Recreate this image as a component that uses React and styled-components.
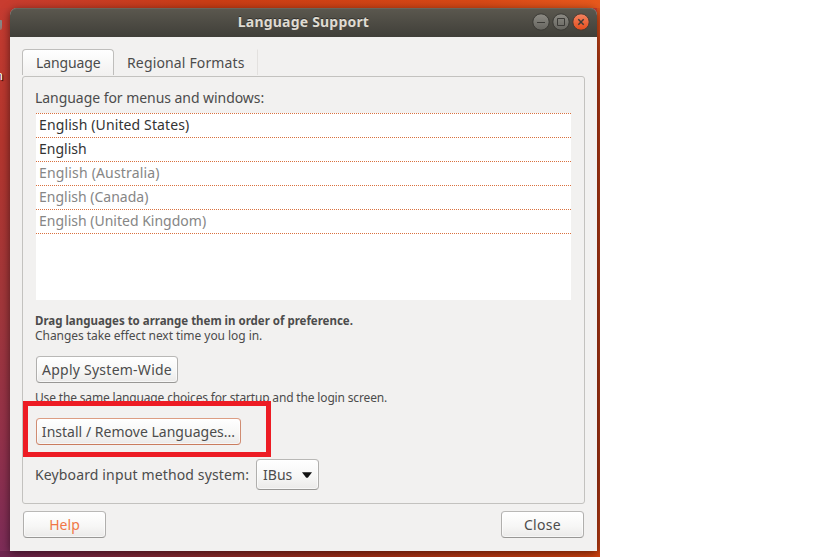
import React from "react";
import styled, { createGlobalStyle } from "styled-components";

const GlobalStyle = createGlobalStyle`
  * { box-sizing: border-box; }
  body { margin: 0; background: #fff; overflow: hidden; }
`;

const Desktop = styled.div`
  position: relative;
  width: 600px;
  height: 557px;
  padding: 8px 3px 6px 10px;
  overflow: hidden;
  font-family: "Noto Sans", sans-serif;
  font-size: 14px;
  background:
    linear-gradient(90deg, #6f2450, #8c2a2c 35%, #a52f17 60%, #d0420f) 0 551px / 600px 6px no-repeat,
    linear-gradient(90deg, #c83c30, #cb3d15 35%, #d84916 80%, #e9591d) 0 0 / 600px 8px no-repeat,
    linear-gradient(180deg, #e2541c, #b53a15 12%, #a83414 85%, #c54014) 597px 0 / 3px 557px no-repeat,
    linear-gradient(180deg, #c73c31, #b5362e 25%, #a2373b 55%, #94324a 78%, #7c2c59);
`;

const IconLabel = styled.span`
  position: absolute;
  left: -5px;
  top: 66px;
  line-height: 18px;
  font-size: 13px;
  color: #fff;
  text-shadow: 1px 1px 1px #000;
`;

const IconEdge = styled.span`
  position: absolute;
  left: 0;
  top: 20px;
  width: 2px;
  height: 10px;
  background: linear-gradient(#858585 50%, #a66a62);
  border-radius: 0 1px 3px 0;
`;

const Window = styled.main`
  position: relative;
  display: flex;
  flex-direction: column;
  width: 587px;
  height: 543px;
  border-radius: 7px 7px 0 0;
  background: #f2f1f0;
  color: #4c4c4c;
  box-shadow: 0 2px 10px rgba(0, 0, 0, 0.55);
`;

const TitleBar = styled.header`
  display: grid;
  grid-template-columns: 66px 1fr 66px;
  align-items: center;
  height: 29px;
  flex: none;
  border-radius: 7px 7px 0 0;
  background: linear-gradient(#5b584f, #403f39);
  box-shadow: inset 0 1px #68655c;
`;

const Title = styled.h1`
  grid-column: 2;
  margin: 0 0 1px;
  text-align: center;
  font-size: 14px;
  line-height: 20px;
  letter-spacing: 0.2px;
  color: #dfdbd2;
  text-shadow: 0 -1px #33322e;
`;

const Controls = styled.div`
  display: flex;
  gap: 2px;
  padding-left: 1px;
  margin-top: -1px;
`;

const Control = styled.svg`
  display: block;
  width: 18px;
  height: 18px;
`;

const Content = styled.div`
  display: flex;
  flex-direction: column;
  padding: 12px 12px 0;
`;

const Tabs = styled.nav`
  display: flex;
  height: 27px;
`;

const Tab = styled.div`
  width: ${(p) => p.$width}px;
  height: 26px;
  padding-left: ${(p) => (p.$active ? 13 : 12)}px;
  line-height: 26px;
  letter-spacing: ${(p) => p.$track}px;
  white-space: nowrap;
  border: 1px solid transparent;
  border-bottom: 0;
  ${(p) =>
    p.$active
      ? "border-color: #bfbebc; border-radius: 4px 4px 0 0; background: linear-gradient(#fff, #f2f1f0);"
      : "border-right-color: #e3e1df;"}
`;

const Page = styled.section`
  display: flex;
  flex-direction: column;
  align-items: flex-start;
  width: 563px;
  height: 428px;
  padding: 11px 12px 0;
  border: 1px solid #c3c2bf;
  border-radius: 3px;
`;

const Label = styled.span`
  line-height: 20px;
  letter-spacing: ${(p) => p.$track || 0}px;
  white-space: nowrap;
`;

const LanguageList = styled.div`
  width: 535px;
  height: 187px;
  margin: 5px 0 0 1px;
  background: #fff;
`;

const dots = "repeating-linear-gradient(90deg, #d9713f 0 1px, #fff 1px 2px)";

const LanguageRow = styled.div`
  height: ${(p) => (p.$last ? 25 : 24)}px;
  padding-left: 3px;
  line-height: 24px;
  letter-spacing: ${(p) => p.$track}px;
  color: ${(p) => (p.$off ? "#868686" : "#333")};
  background: ${(p) =>
    p.$last
      ? `${dots} 0 0 / 100% 1px no-repeat, ${dots} 0 100% / 100% 1px no-repeat`
      : `${dots} 0 0 / 100% 1px no-repeat`};
`;

const Note = styled.p`
  margin: ${(p) => p.$top || 0}px 0 0;
  font-size: ${(p) => p.$size || 12}px;
  font-weight: ${(p) => (p.$bold ? 700 : 400)};
  line-height: 15px;
  letter-spacing: ${(p) => p.$track}px;
  white-space: nowrap;
`;

const Button = styled.button`
  display: flex;
  align-items: center;
  justify-content: center;
  width: ${(p) => p.$width}px;
  height: ${(p) => p.$height || 27}px;
  padding: 0;
  margin: ${(p) => p.$margin || 0};
  font: inherit;
  letter-spacing: ${(p) => p.$track || 0}px;
  white-space: nowrap;
  color: ${(p) => (p.$link ? "#f07746" : "#4c4c4c")};
  border: 1px solid;
  border-color: ${(p) => (p.$focus ? "#dc9d83 #d08c72 #ca7c5e" : "#b9b8b6 #b0afad #989795")};
  border-radius: 4px;
  background: linear-gradient(#fff, #f7f7f6 55%, #ebeae9);
  box-shadow: inset 0 0 0 1px rgba(255, 255, 255, 0.6);
`;

const MethodRow = styled.div`
  display: flex;
  align-items: center;
  height: 31px;
  margin-top: 14px;
`;

const Arrow = styled.svg`
  width: 10px;
  height: 6px;
  margin-left: 10px;
`;

const Footer = styled.footer`
  display: flex;
  justify-content: space-between;
  padding: 7px 1px 0;
  width: 563px;
`;

const Highlight = styled.div`
  position: absolute;
  left: 13px;
  top: 393px;
  width: 248px;
  height: 56px;
  border: 5px solid #ed1c24;
  pointer-events: none;
`;

const languages = [
  { name: "English (United States)", track: 0.12 },
  { name: "English", track: 0 },
  { name: "English (Australia)", track: 0.17, off: true },
  { name: "English (Canada)", track: 0, off: true },
  { name: "English (United Kingdom)", track: 0, off: true },
];

const controls = [
  { id: "minimize", paint: "url(#gray)", edge: "#3a3934", d: "M5 9.5H13" },
  { id: "maximize", paint: "url(#gray)", edge: "#3a3934", d: "M5.5 5.5H12.5V12.5H5.5Z" },
  { id: "close", paint: "url(#orange)", edge: "#493a32", d: "M6.3 6.3L11.7 11.7M11.7 6.3L6.3 11.7" },
];

export default function App() {
  return (
    <Desktop>
      <GlobalStyle />
      <Window>
        <TitleBar>
          <Title>Language Support</Title>
          <Controls>
            {controls.map((c) => (
              <Control key={c.id} viewBox="0 0 18 18" aria-label={c.id}>
                <defs>
                  <linearGradient id="gray" x2="0" y2="1">
                    <stop stopColor="#8d8b84" />
                    <stop offset="1" stopColor="#65645e" />
                  </linearGradient>
                  <linearGradient id="orange" x2="0" y2="1">
                    <stop stopColor="#f58461" />
                    <stop offset="1" stopColor="#e34c1b" />
                  </linearGradient>
                </defs>
                <circle cx="9" cy="9" r="8.2" fill={c.paint} stroke={c.edge} />
                <path d={c.d} fill="none" stroke="#3c3b37" strokeWidth={c.id === "close" ? 1.5 : 1} />
              </Control>
            ))}
          </Controls>
        </TitleBar>
        <Content>
          <Tabs>
            <Tab $active $width={92} $track={-0.12}>Language</Tab>
            <Tab $width={144} $track={0.15}>Regional Formats</Tab>
          </Tabs>
          <Page>
            <Label $track={-0.05}>Language for menus and windows:</Label>
            <LanguageList>
              {languages.map((l, i) => (
                <LanguageRow key={l.name} $track={l.track} $off={l.off} $last={i === languages.length - 1}>
                  {l.name}
                </LanguageRow>
              ))}
            </LanguageList>
            <Note $top={13} $size={11.5} $bold $track={-0.01}>Drag languages to arrange them in order of preference.</Note>
            <Note $track={-0.05}>Changes take effect next time you log in.</Note>
            <Button $width={142} $track={0.25} $margin="13px 0 0 1px">Apply System-Wide</Button>
            <Note $top={7} $track={-0.16}>Use the same language choices for startup and the login screen.</Note>
            <Button $focus $width={205} $track={0.02} $margin="13px 0 0 1px">Install / Remove Languages...</Button>
            <MethodRow>
              <Label $track={0.14}>Keyboard input method system:</Label>
              <Button $width={63} $height={31} $margin="0 0 0 7px">
                <span>IBus</span>
                <Arrow viewBox="0 0 10 6"><path d="M0 0.3H10L6 5.4Q5 6.3 4 5.4Z" fill="#111" /></Arrow>
              </Button>
            </MethodRow>
          </Page>
          <Footer>
            <Button $link $width={83}>Help</Button>
            <Button $width={83} $track={0.3}>Close</Button>
          </Footer>
        </Content>
        <Highlight />
      </Window>
      <IconEdge />
      <IconLabel>n</IconLabel>
    </Desktop>
  );
}
